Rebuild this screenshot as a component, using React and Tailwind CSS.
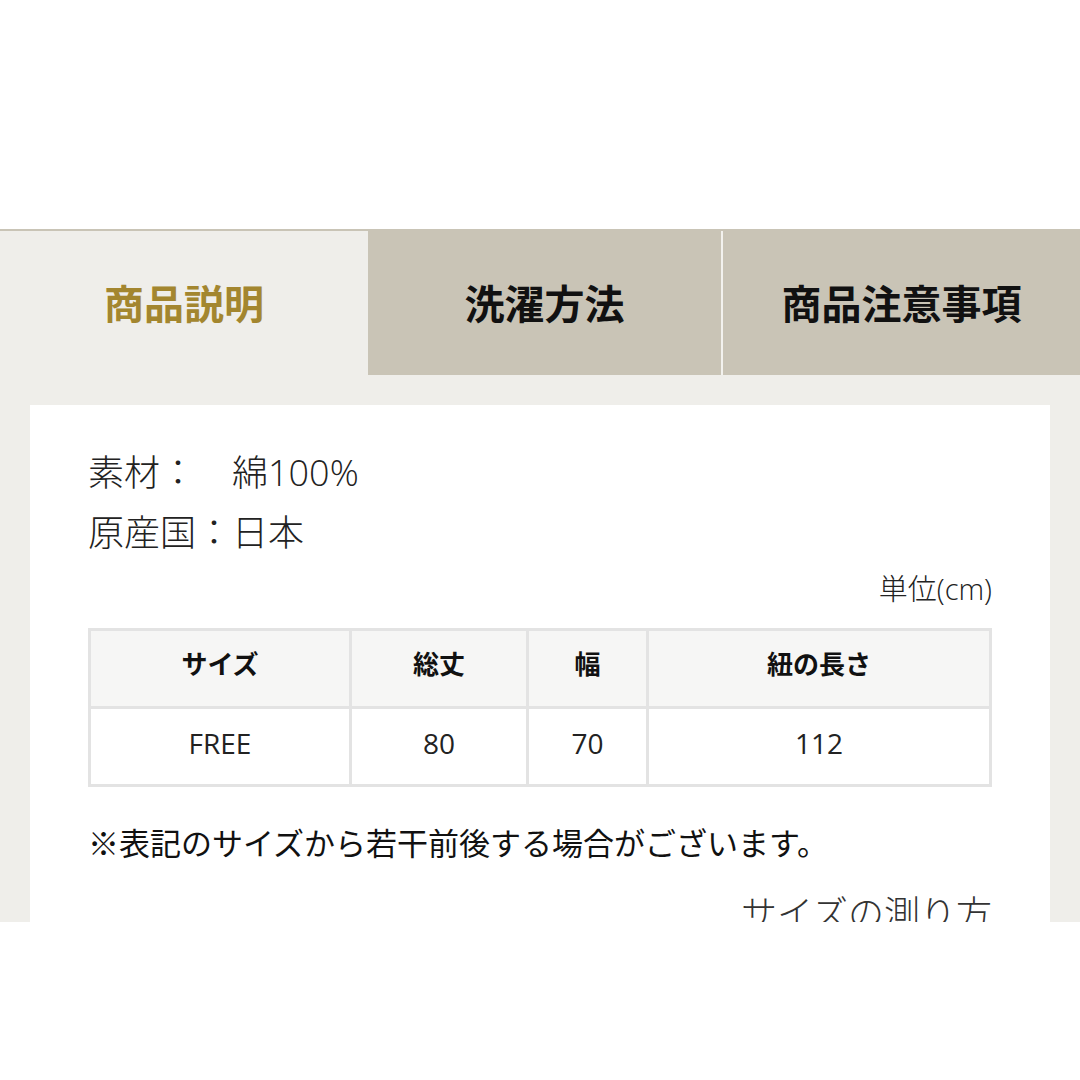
const font = { fontFamily: '"Noto Sans CJK JP", "Noto Sans", sans-serif' };
const bodyFont = { fontFamily: '"Open Sans", "Noto Sans CJK JP", sans-serif' };

const rows = [{ size: 'FREE', length: '80', width: '70', cord: '112' }];

export default function App() {
  return (
    <div className="w-[1080px] h-[1080px] bg-white overflow-hidden" style={font}>
      <div className="h-[229px]" />
      <div className="h-[693px] overflow-hidden bg-[#efeeea]">
        {/* tabs */}
        <div className="border-t-2 border-[#c9c4b6] flex h-[146px]">
          <div className="w-[368px] flex items-center justify-center pb-[3px] bg-[#efeeea] text-[40px] font-bold text-[#a3862f]">
            商品説明
          </div>
          <div className="w-[353px] flex items-center justify-center pb-[3px] bg-[#c9c4b6] text-[40px] font-bold text-[#111]">
            洗濯方法
          </div>
          <div className="w-[2px] bg-[#f3f2ee]" />
          <div className="flex-1 flex items-center justify-center pb-[3px] bg-[#c9c4b6] text-[40px] font-bold text-[#111]">
            商品注意事項
          </div>
        </div>

        <div className="px-[30px] pt-[30px]">
          <div className="bg-white px-[58px] pt-[38px] pb-10 text-[#222]" style={bodyFont}>
            <p className="text-[36px] leading-[60px] font-light">素材：　綿100%</p>
            <p className="text-[36px] leading-[60px] font-light">原産国：日本</p>
            <p className="text-right text-[29px] leading-[40px] font-light mt-[6px]">単位(cm)</p>

            <table className="mt-[19px] w-full border-collapse text-center">
              <thead>
                <tr className="bg-[#f6f6f5] h-[78px]">
                  <th className="w-[261px] pb-[8px] border-[3px] border-[#e3e3e3] text-[26px] font-bold text-[#111]">サイズ</th>
                  <th className="w-[177px] pb-[8px] border-[3px] border-[#e3e3e3] text-[26px] font-bold text-[#111]">総丈</th>
                  <th className="w-[120px] pb-[8px] border-[3px] border-[#e3e3e3] text-[26px] font-bold text-[#111]">幅</th>
                  <th className="pb-[8px] border-[3px] border-[#e3e3e3] text-[26px] font-bold text-[#111]">紐の長さ</th>
                </tr>
              </thead>
              <tbody>
                {rows.map((r) => (
                  <tr key={r.size} className="h-[78px] text-[28px] font-normal text-[#222]">
                    <td className="pb-[8px] border-[3px] border-[#e3e3e3]">{r.size}</td>
                    <td className="pb-[8px] border-[3px] border-[#e3e3e3]">{r.length}</td>
                    <td className="pb-[8px] border-[3px] border-[#e3e3e3]">{r.width}</td>
                    <td className="pb-[8px] border-[3px] border-[#e3e3e3]">{r.cord}</td>
                  </tr>
                ))}
              </tbody>
            </table>

            <p className="mt-[33px] text-[31px] leading-[44px] text-[#111]" style={font}>
              ※表記のサイズから若干前後する場合がございます。
            </p>
            <p className="mt-[22px] text-right text-[36px] leading-[50px] font-light text-[#333]" style={font}>
              サイズの測り方
            </p>
          </div>
        </div>
      </div>
    </div>
  );
}
